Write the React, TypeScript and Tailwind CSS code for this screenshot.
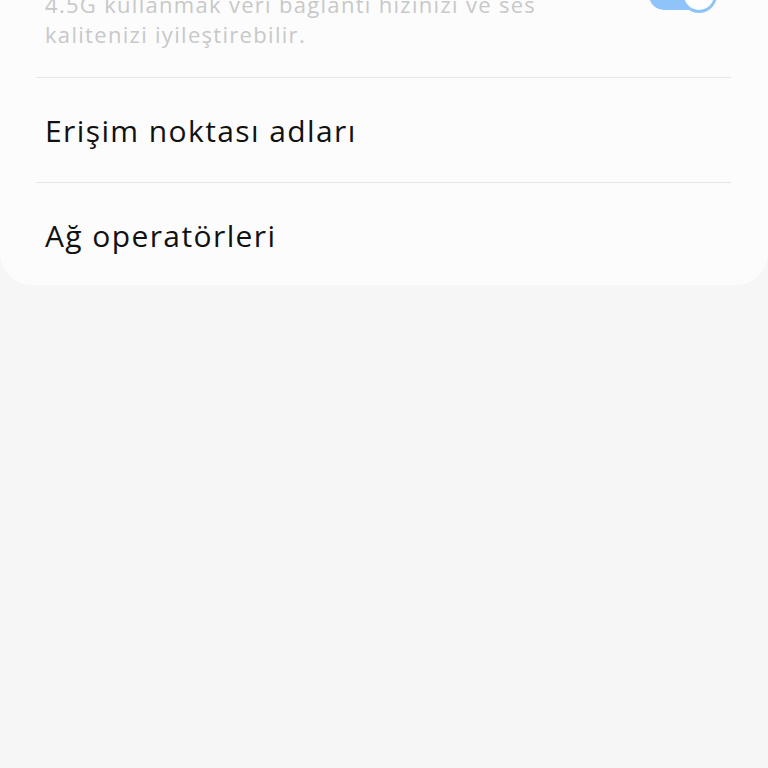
import React from 'react';

const Divider: React.FC = () => <div className="ml-[36px] mr-[37px] h-px bg-[#e6e6e6]" />;

const App: React.FC = () => {
  return (
    <div className="h-[768px] w-[768px] overflow-hidden bg-[#f6f6f6]" style={{ fontFamily: '"Open Sans", Roboto, sans-serif' }}>
      <div className="rounded-b-[32px] bg-[#fcfcfc]">
        {/* 4.5G row, scrolled partly out of view */}
        <div className="flex items-start pl-[45px] pr-[51px] pb-[28px] mt-[-11px]">
          <div className="flex-1 text-[22px] leading-[30px] tracking-[1.3px] text-[#c8c8c8]">
            4.5G kullanmak veri bağlantı hızınızı ve ses
            <br />
            kalitenizi iyileştirebilir.
          </div>
          <div className="relative mt-[-12px] h-[36px] w-[68px] shrink-0">
            <div className="absolute left-0 top-[3px] h-[30px] w-[64px] rounded-full bg-[#8fc4fb]" />
            <div className="absolute right-0 top-0 h-[36px] w-[36px] rounded-full border-[3px] border-[#8fc4fb] bg-white" />
          </div>
        </div>
        <Divider />
        <div className="flex h-[104px] items-center pl-[45px] pt-[1px] text-[30px] tracking-[1.4px] text-[#111111]">
          Erişim noktası adları
        </div>
        <Divider />
        <div className="flex h-[102px] items-center pl-[45px] pt-[2px] text-[30px] tracking-[1.4px] text-[#111111]">
          Ağ operatörleri
        </div>
      </div>
    </div>
  );
};

export default App;
